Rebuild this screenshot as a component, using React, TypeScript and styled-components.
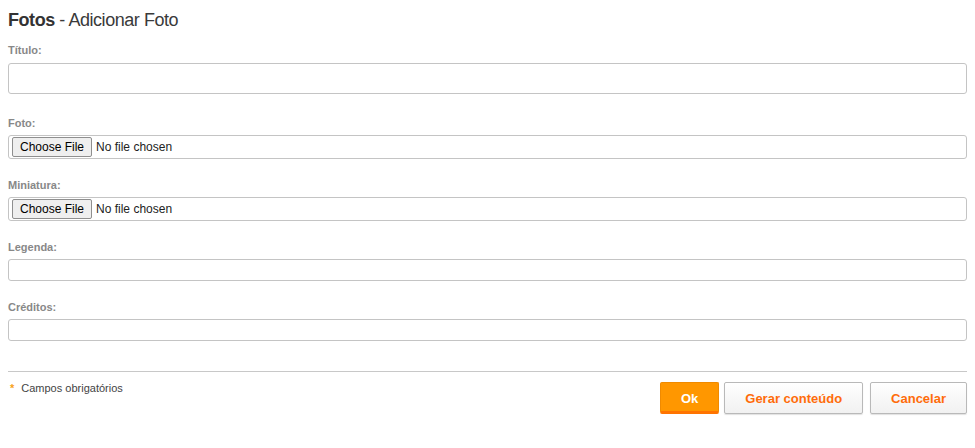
import React from "react";
import styled, { createGlobalStyle } from "styled-components";

const Global = createGlobalStyle`
  body {
    margin: 0;
    padding: 8px;
    background: #fff;
    font-family: "Liberation Sans", Arial, sans-serif;
    color: #333;
  }
  * { box-sizing: border-box; }
`;

const Page = styled.div`
  display: flex;
  flex-direction: column;
`;

const Title = styled.h1`
  margin: 0;
  font-size: 18px;
  line-height: 24px;
  font-weight: normal;
  color: #3a3a3a;
  letter-spacing: -0.45px;
  b { font-weight: bold; color: #333; }
`;

const Field = styled.div<{ $mb: number; $mt?: number }>`
  display: flex;
  flex-direction: column;
  margin-top: ${(p) => p.$mt ?? 0}px;
  margin-bottom: ${(p) => p.$mb}px;
`;

const Label = styled.label<{ $gap?: number }>`
  font-size: 11px;
  line-height: 14px;
  font-weight: bold;
  color: #888;
  margin-bottom: ${(p) => p.$gap ?? 5}px;
`;

const TextInput = styled.input<{ $h: number }>`
  width: 100%;
  height: ${(p) => p.$h}px;
  border: 1px solid #c4c4c4;
  border-radius: 3px;
  padding: 2px 6px;
  font-family: "Liberation Sans", Arial, sans-serif;
  font-size: 12px;
  background: #fff;
  outline: none;
`;

const FileInput = styled.input`
  width: 100%;
  height: 24px;
  border: 1px solid #c4c4c4;
  border-radius: 3px;
  padding: 1px 3px;
  font-family: "Liberation Sans", Arial, sans-serif;
  font-size: 12px;
  color: #222;
  background: #fff;
  &::file-selector-button {
    font-family: "Liberation Sans", Arial, sans-serif;
    font-size: 12px;
    height: 20px;
    padding: 0 7px;
    margin-right: 4px;
    border: 1px solid #8f8f8f;
    border-radius: 2px;
    background: #efefef;
    color: #000;
  }
`;

const Divider = styled.hr`
  margin: 30px 0 0;
  border: 0;
  border-top: 1px solid #c8c8c8;
  height: 0;
`;

const Footer = styled.div`
  display: flex;
  justify-content: space-between;
  align-items: flex-start;
  margin-top: 10px;
`;

const Note = styled.div`
  display: flex;
  align-items: center;
  gap: 7px;
  font-size: 11px;
  line-height: 14px;
  color: #444;
  margin-top: -1px;
`;

const Star = styled.span`
  color: #f7a11a;
  font-weight: bold;
  font-size: 11px;
  margin-left: 2px;
`;

const Buttons = styled.div`
  display: flex;
  gap: 5px;
`;

const Button = styled.button<{ $primary?: boolean; $ml?: number }>`
  height: 32px;
  padding: 0 20px;
  margin-left: ${(p) => p.$ml ?? 0}px;
  font-family: "Liberation Sans", Arial, sans-serif;
  font-size: 13px;
  font-weight: bold;
  border-radius: 2px;
  cursor: pointer;
  ${(p) =>
    p.$primary
      ? `
    background: #ff9700;
    color: #fff;
    border: 1px solid #f08a00;
    border-bottom: 3px solid #ff7400;
    padding-top: 2px;
  `
      : `
    background: linear-gradient(#ffffff, #f1f1f1);
    color: #ff6c0a;
    border: 1px solid #b9b9b9;
    box-shadow: 0 1px 1px rgba(0,0,0,0.12);
  `}
`;

export default function App() {
  return (
    <Page>
      <Global />
      <Title>
        <b>Fotos</b> - Adicionar Foto
      </Title>
      <Field $mt={11} $mb={22}>
        <Label $gap={6}>Título:</Label>
        <TextInput $h={31} />
      </Field>
      <Field $mb={19}>
        <Label>Foto:</Label>
        <FileInput type="file" />
      </Field>
      <Field $mb={19}>
        <Label>Miniatura:</Label>
        <FileInput type="file" />
      </Field>
      <Field $mb={19}>
        <Label>Legenda:</Label>
        <TextInput $h={22} />
      </Field>
      <Field $mb={0}>
        <Label>Créditos:</Label>
        <TextInput $h={22} />
      </Field>
      <Divider />
      <Footer>
        <Note>
          <Star>*</Star>
          Campos obrigatórios
        </Note>
        <Buttons>
          <Button $primary>Ok</Button>
          <Button>Gerar conteúdo</Button>
          <Button $ml={2}>Cancelar</Button>
        </Buttons>
      </Footer>
    </Page>
  );
}
